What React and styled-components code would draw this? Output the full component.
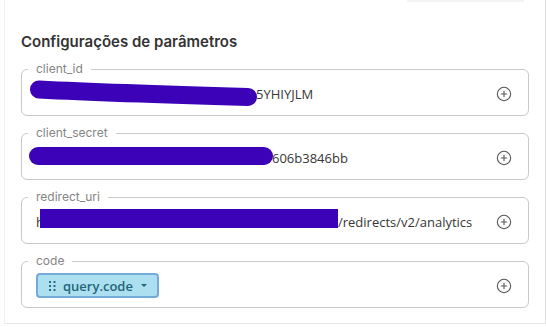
import React from "react";
import styled, { createGlobalStyle } from "styled-components";
import { CirclePlus } from "lucide-react";

const Global = createGlobalStyle`
  html, body { margin: 0; padding: 0; background: #ffffff; }
  body { font-family: "Open Sans", "Liberation Sans", sans-serif; }
`;

const Panel = styled.div`
  margin-left: 4px;
  width: 542px;
  box-sizing: border-box;
  height: 324px;
  border-left: 1px solid #efefef;
  border-right: 1px solid #dcdcdc;
  border-bottom: 1px solid #e6e6e6;
  padding: 0 15px 0 16px;
  display: flex;
  flex-direction: column;
`;

const TopRow = styled.div`
  display: flex;
  justify-content: flex-end;
  margin-right: 6px;
`;

const TopTab = styled.div`
  width: 117px;
  height: 2px;
  background: #f4f4f4;
`;

const Title = styled.h2`
  margin: 30px 0 10px 0;
  font-family: Inter, "Liberation Sans", sans-serif;
  font-size: 15px;
  line-height: 20px;
  font-weight: 600;
  color: #333333;
`;

const List = styled.div`
  display: flex;
  flex-direction: column;
  gap: 10px;
`;

const Field = styled.fieldset`
  margin: 0;
  width: 508px;
  box-sizing: border-box;
  border: 1px solid #c9c9c9;
  border-radius: 6px;
  padding: 4px 16px 8px 14px;
  min-inline-size: 0;
`;

const Legend = styled.legend`
  margin-left: -8px;
  padding: 0 8px;
  font-family: Inter, "Liberation Sans", sans-serif;
  font-size: 12px;
  line-height: 14px;
  color: #858585;
`;

const Row = styled.div`
  position: relative;
  height: 27px;
  display: flex;
  align-items: center;
  justify-content: space-between;
`;

const Value = styled.div`
  display: flex;
  align-items: center;
  font-size: 13px;
  line-height: 18px;
  color: #363636;
  white-space: nowrap;
`;

const Gap = styled.span`
  display: inline-block;
  flex: none;
  width: ${(p) => p.$w}px;
`;

const Mark = styled.svg`
  position: absolute;
  left: ${(p) => p.$left}px;
  top: ${(p) => p.$top}px;
  pointer-events: none;
`;

const AddIcon = styled(CirclePlus)`
  flex: none;
  color: #555555;
`;

const Chip = styled.div`
  display: inline-flex;
  align-items: center;
  box-sizing: border-box;
  height: 25px;
  padding: 0 10px 0 11px;
  background: #acdff0;
  border: 2px solid #74abd9;
  border-radius: 4px;
  color: #1f6579;
  font-size: 13px;
  font-weight: 600;
  line-height: 18px;
`;

const ChipLabel = styled.span`
  margin: 0 8px 0 7px;
`;

const Caret = styled.span`
  width: 0;
  height: 0;
  border-left: 3px solid transparent;
  border-right: 3px solid transparent;
  border-top: 3px solid #1f6579;
`;

const Dots = () => (
  <svg width="7" height="10" viewBox="0 0 7 10" fill="#2a6d80">
    <rect x="0" y="0" width="2" height="2" />
    <rect x="4.5" y="0" width="2" height="2" />
    <rect x="0" y="4" width="2" height="2" />
    <rect x="4.5" y="4" width="2" height="2" />
    <rect x="0" y="8" width="2" height="2" />
    <rect x="4.5" y="8" width="2" height="2" />
  </svg>
);

const INK = "#3b02b8";

export default function App() {
  return (
    <>
      <Global />
      <Panel>
        <TopRow>
          <TopTab />
        </TopRow>
        <Title>Configurações de parâmetros</Title>
        <List>
          <Field>
            <Legend>client_id</Legend>
            <Row>
              <Value>
                <Gap $w={220} />
                5YHIYJLM
              </Value>
              <AddIcon size={16} strokeWidth={1.6} />
              <Mark $left={-7} $top={0} width="232" height="27" viewBox="0 0 232 27">
                <path
                  d="M10 9.5 Q 80 13 219 17"
                  stroke={INK}
                  strokeWidth="18"
                  strokeLinecap="round"
                  fill="none"
                />
              </Mark>
            </Row>
          </Field>
          <Field>
            <Legend>client_secret</Legend>
            <Row>
              <Value>
                <Gap $w={236} />
                606b3846bb
              </Value>
              <AddIcon size={16} strokeWidth={1.6} />
              <Mark $left={-7} $top={0} width="245" height="27" viewBox="0 0 245 27">
                <path
                  d="M9 12 L235 12"
                  stroke={INK}
                  strokeWidth="18"
                  strokeLinecap="round"
                  fill="none"
                />
              </Mark>
            </Row>
          </Field>
          <Field>
            <Legend>redirect_uri</Legend>
            <Row>
              <Value>
                h
                <Gap $w={294} />
                /redirects/v2/analytics
              </Value>
              <AddIcon size={16} strokeWidth={1.6} />
              <Mark $left={4} $top={1} width="298" height="19" viewBox="0 0 298 19">
                <rect x="0" y="0" width="298" height="19" fill={INK} />
              </Mark>
            </Row>
          </Field>
          <Field>
            <Legend>code</Legend>
            <Row>
              <Chip>
                <Dots />
                <ChipLabel>query.code</ChipLabel>
                <Caret />
              </Chip>
              <AddIcon size={16} strokeWidth={1.6} />
            </Row>
          </Field>
        </List>
      </Panel>
    </>
  );
}
